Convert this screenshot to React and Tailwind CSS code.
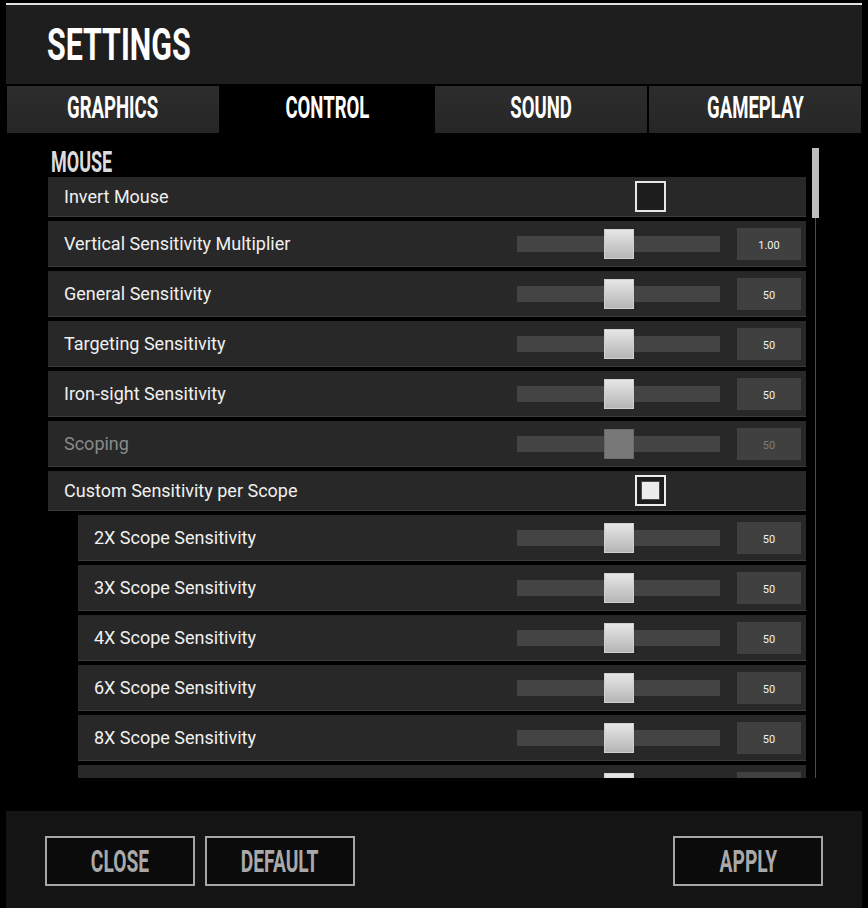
import React from "react";

const font = { fontFamily: "Roboto, 'Liberation Sans', sans-serif" };

// condensed display text (game-style headings)
function Cond({ children, className = "" }) {
  return <span className={`inline-block font-bold leading-none ${className}`}>{children}</span>;
}

function Slider({ value, disabled }) {
  return (
    <div className="flex items-center">
      <div className="relative w-[203px] h-[16px] bg-[#444444]">
        <div
          className={`absolute left-[87px] top-[-7px] w-[30px] h-[30px] border ${
            disabled
              ? "bg-[#787878] border-[#6a6a6a]"
              : "bg-gradient-to-b from-[#e6e6e6] to-[#b6b6b6] border-[#d0d0d0]"
          }`}
        />
      </div>
      <div
        className={`ml-[17px] mr-[5px] w-[64px] h-[32px] bg-[#404040] flex items-center justify-center pt-[3px] text-[11px] leading-none ${
          disabled ? "text-[#7c7c7c]" : "text-[#f2f2f2]"
        }`}
      >
        {value}
      </div>
    </div>
  );
}

function Row({ label, tall, indent, disabled, children }) {
  return (
    <div
      className={`flex items-center bg-[#282828] border-b border-[#3b3b3b] mb-[4px] ${
        tall ? "h-[46px]" : "h-[40px]"
      } ${indent ? "ml-[30px]" : ""}`}
    >
      <div
        className={`flex-1 pl-[16px] text-[18px] leading-none ${
          disabled ? "text-[#8a8a8a]" : "text-[#f0f0f0]"
        }`}
      >
        {label}
      </div>
      {children}
    </div>
  );
}

export default function App() {
  const mainRows = [
    { label: "Vertical Sensitivity Multiplier", value: "1.00" },
    { label: "General Sensitivity", value: "50" },
    { label: "Targeting Sensitivity", value: "50" },
    { label: "Iron-sight Sensitivity", value: "50" },
    { label: "Scoping", value: "50", disabled: true },
  ];
  const scopeRows = ["2X", "3X", "4X", "6X", "8X"];
  const tabs = ["GRAPHICS", "CONTROL", "SOUND", "GAMEPLAY"];

  return (
    <div className="w-[868px] h-[908px] bg-black overflow-hidden flex flex-col" style={font}>
      {/* top edge */}
      <div className="mt-[3px] mx-[6px] h-[2px] bg-[#e2e2e2]" />

      {/* Header */}
      <div className="mx-[6px] h-[79px] bg-[#1e1e1e] flex items-center pl-[41px]">
        <Cond className="text-[44px] text-white scale-x-[0.69] origin-left">SETTINGS</Cond>
      </div>

      {/* Tabs */}
      <div className="mt-[2px] mx-[7px] grid grid-cols-4 gap-[2px] h-[47px]">
        {tabs.map((t) => (
          <div
            key={t}
            className={`flex items-center justify-center pb-[6px] ${
              t === "CONTROL" ? "bg-black" : "bg-gradient-to-b from-[#2d2d2d] to-[#262626]"
            }`}
          >
            <Cond className="text-[32px] text-white scale-x-[0.58]">{t}</Cond>
          </div>
        ))}
      </div>

      {/* Content */}
      <div className="mt-[13px] flex">
        <div className="ml-[48px] w-[758px] flex flex-col">
          <div className="h-[31px] pl-[3px] flex items-center">
            <Cond className="text-[30px] text-[#dcdcdc] scale-x-[0.6] origin-left">MOUSE</Cond>
          </div>

          <div className="h-[601px] overflow-hidden">
            <Row label="Invert Mouse">
              <div className="mr-[140px] w-[31px] h-[31px] border-2 border-[#e6e6e6] bg-[#1d1d1d]" />
            </Row>

            {mainRows.map((r) => (
              <Row key={r.label} label={r.label} tall disabled={r.disabled}>
                <Slider value={r.value} disabled={r.disabled} />
              </Row>
            ))}

            <Row label="Custom Sensitivity per Scope">
              <div className="mr-[140px] w-[31px] h-[31px] border-2 border-[#ececec] bg-[#1d1d1d] flex items-center justify-center">
                <div className="w-[19px] h-[19px] bg-[#ececec] border border-[#4a4a4a]" />
              </div>
            </Row>

            {scopeRows.map((s) => (
              <Row key={s} label={`${s} Scope Sensitivity`} tall indent>
                <Slider value="50" />
              </Row>
            ))}

            {/* next row, mostly scrolled out of view */}
            <Row label="" tall indent>
              <Slider value="" />
            </Row>
          </div>
        </div>

        {/* Scrollbar */}
        <div className="ml-[6px] w-[7px] h-[632px] flex flex-col pt-[2px]">
          <div className="h-[70px] bg-[#bdbdbd]" />
          <div className="flex-1 mx-auto w-px bg-[#4e4e4e]" />
        </div>
      </div>

      {/* Footer */}
      <div className="mt-[33px] mx-[6px] flex-1 bg-[#141414] flex items-start pt-[25px] px-[39px]">
        {["CLOSE", "DEFAULT"].map((b) => (
          <button
            key={b}
            className="mr-[10px] w-[150px] h-[50px] border-2 border-[#a6a6a6] bg-[#0b0b0b] flex items-center justify-center"
          >
            <Cond className="text-[31px] text-[#a9a9a9] scale-x-[0.62]">{b}</Cond>
          </button>
        ))}
        <button className="ml-auto w-[150px] h-[50px] border-2 border-[#a6a6a6] bg-[#0b0b0b] flex items-center justify-center">
          <Cond className="text-[31px] text-[#a9a9a9] scale-x-[0.62]">APPLY</Cond>
        </button>
      </div>
    </div>
  );
}
